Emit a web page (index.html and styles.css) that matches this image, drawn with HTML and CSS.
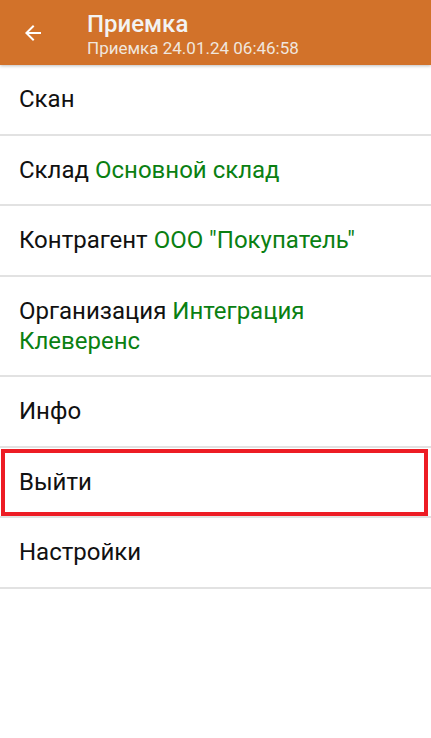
FILE: index.html
```html
<!DOCTYPE html>
<html lang="ru">
<head>
  <meta charset="UTF-8">
  <title>Приемка</title>
  <link rel="stylesheet" href="styles.css">
</head>
<body>

  <div class="toolbar">
    <div class="back">
      <svg width="24" height="24" viewBox="0 0 24 24">
        <path d="M20 11H7.83l5.59-5.59L12 4l-8 8 8 8 1.41-1.41L7.83 13H20v-2z" fill="#fff"/>
      </svg>
    </div>
    <div class="titles">
      <div class="title">Приемка</div>
      <div class="subtitle">Приемка 24.01.24 06:46:58</div>
    </div>
  </div>

  <ul class="menu">
    <li>Скан</li>
    <li>Склад <span class="value">Основной склад</span></li>
    <li>Контрагент <span class="value">ООО "Покупатель"</span></li>
    <li>Организация <span class="value">Интеграция Клеверенс</span></li>
    <li>Инфо</li>
    <li class="marked">Выйти</li>
    <li>Настройки</li>
  </ul>

</body>
</html>
```

FILE: styles.css
```css
body {
  font-family: Roboto, "Noto Sans", Arial, sans-serif;
  background-color: #fff;
  margin: 0;
  padding: 0;
}

.toolbar {
  display: flex;
  align-items: center;
  height: 65px;
  background-color: #d2722a;
  box-shadow: 0 1px 3px rgba(0, 0, 0, 0.25);
  color: #fff;
}

.back {
  width: 24px;
  height: 24px;
  margin-left: 21px;
  margin-right: 42px;
}

.titles {
  padding-top: 3px;
}

.title {
  font-size: 24px;
  font-weight: 500;
  line-height: 28px;
  color: #f3f3f3;
}

.subtitle {
  font-size: 17px;
  line-height: 20px;
  color: #f0e6de;
}

.menu {
  list-style: none;
  margin: 0;
  padding: 0;
}

.menu li {
  padding: 19px 19px 19.5px;
  border-bottom: 2px solid #e2e2e2;
  font-size: 24px;
  line-height: 30px;
  color: #111;
}

.value {
  color: #0a8012;
}

/* red frame drawn over the "Выйти" row */
.menu li.marked {
  position: relative;
}

.menu li.marked::after {
  content: "";
  position: absolute;
  top: 1.5px;
  bottom: 0;
  left: 1px;
  right: 3px;
  border: 4px solid #ed1c24;
}
```
